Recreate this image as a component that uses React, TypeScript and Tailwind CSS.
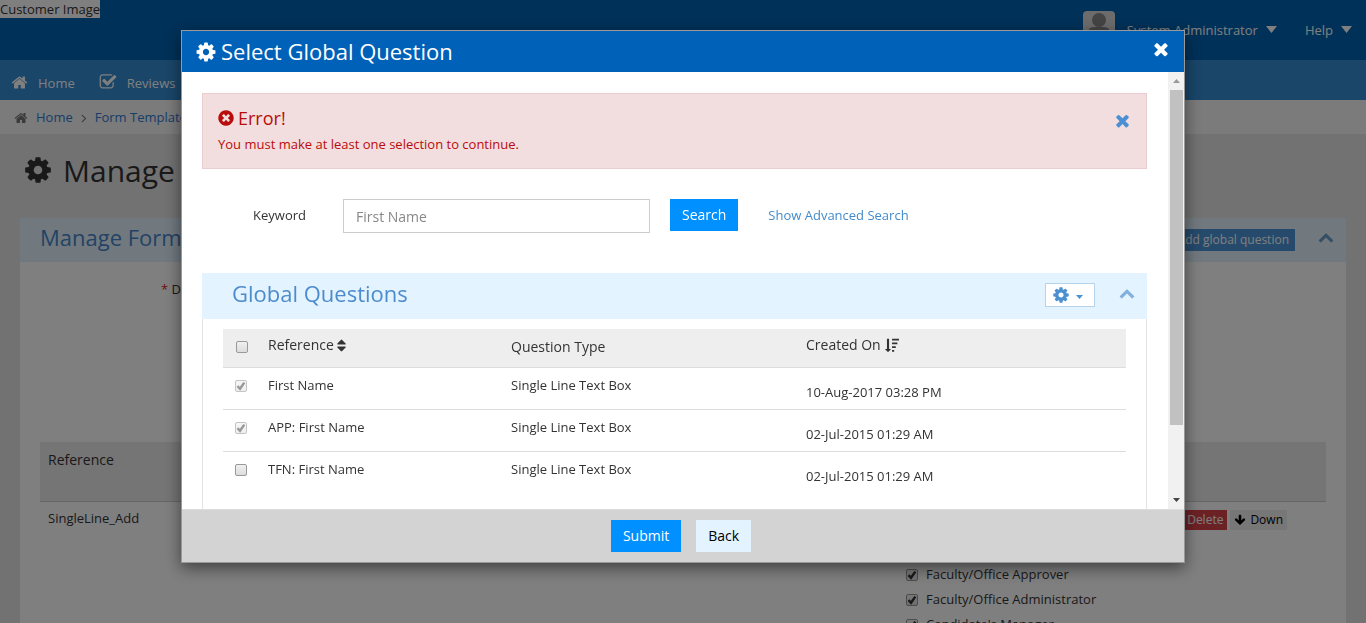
import React from 'react';

const ICONS = {
  cog: 'M1152 896q0-106-75-181t-181-75-181 75-75 181 75 181 181 75 181-75 75-181zm512-109v222q0 12-8 23t-20 13l-185 28q-19 54-39 91 35 50 107 138 10 12 10 25t-9 23q-27 37-99 108t-94 71q-12 0-26-9l-138-108q-44 23-91 38-16 136-29 186-7 28-36 28h-222q-14 0-24.5-8.5t-11.5-21.5l-28-184q-49-16-90-37l-141 107q-10 9-25 9-14 0-25-11-126-114-165-168-7-10-7-23 0-12 8-23 15-21 51-66.5t54-70.5q-27-50-41-99l-183-27q-13-2-21-12.5t-8-23.5v-222q0-12 8-23t19-13l186-28q14-46 39-92-40-57-107-138-10-12-10-24 0-10 9-23 26-36 98.5-107.5t94.5-71.5q13 0 26 10l138 107q44-23 91-38 16-136 29-186 7-28 36-28h222q14 0 24.5 8.5t11.5 21.5l28 184q49 16 90 37l142-107q9-9 24-9 13 0 25 10 129 119 165 170 7 8 7 22 0 12-8 23-15 21-51 66.5t-54 70.5q26 50 41 98l183 28q13 2 21 12.5t8 23.5z',
  times: 'M1490 1322q0 40-28 68l-136 136q-28 28-68 28t-68-28l-294-294-294 294q-28 28-68 28t-68-28l-136-136q-28-28-28-68t28-68l294-294-294-294q-28-28-28-68t28-68l136-136q28-28 68-28t68 28l294 294 294-294q28-28 68-28t68 28l136 136q28 28 28 68t-28 68l-294 294 294 294q28 28 28 68z',
  home: 'M1472 992v480q0 26-19 45t-45 19h-384v-384h-256v384h-384q-26 0-45-19t-19-45v-480q0-1 .5-3t.5-3l575-474 575 474q1 2 1 6zm223-69l-62 74q-8 9-21 11h-3q-13 0-21-7l-692-577-692 577q-12 8-24 7-13-2-21-11l-62-74q-8-10-7-23.5t11-21.5l719-599q32-26 76-26t76 26l244 204v-195q0-14 9-23t23-9h192q14 0 23 9t9 23v408l219 182q10 8 11 21.5t-7 23.5z',
  checkSquare: 'M1472 930v318q0 119-84.5 203.5t-203.5 84.5h-832q-119 0-203.5-84.5t-84.5-203.5v-832q0-119 84.5-203.5t203.5-84.5h832q63 0 117 25 15 7 18 23 3 17-9 29l-49 49q-10 10-23 10-3 0-9-2-23-6-45-6h-832q-66 0-113 47t-47 113v832q0 66 47 113t113 47h832q66 0 113-47t47-113v-254q0-13 9-22l64-64q10-10 23-10 6 0 12 3 20 8 20 29zm231-489l-814 814q-24 24-57 24t-57-24l-430-430q-24-24-24-57t24-57l110-110q24-24 57-24t57 24l263 263 647-647q24-24 57-24t57 24l110 110q24 24 24 57t-24 57z',
  timesCircle: 'M1277 1122q0-26-19-45l-181-181 181-181q19-19 19-45 0-27-19-46l-90-90q-19-19-46-19-26 0-45 19l-181 181-181-181q-19-19-45-19-27 0-46 19l-90 90q-19 19-19 46 0 26 19 45l181 181-181 181q-19 19-19 45 0 27 19 46l90 90q19 19 46 19 26 0 45-19l181-181 181 181q19 19 45 19 27 0 46-19l90-90q19-19 19-46zm387-226q0 209-103 385.5t-279.5 279.5-385.5 103-385.5-103-279.5-279.5-103-385.5 103-385.5 279.5-279.5 385.5-103 385.5 103 279.5 279.5 103 385.5z',
  chevronUp: 'M1683 1331l-166 165q-19 19-45 19t-45-19l-531-531-531 531q-19 19-45 19t-45-19l-166-165q-19-19-19-45.5t19-45.5l742-741q19-19 45-19t45 19l742 741q19 19 19 45.5t-19 45.5z',
  sort: 'M1408 1088q0 26-19 45l-448 448q-19 19-45 19t-45-19l-448-448q-19-19-19-45t19-45 45-19h896q26 0 45 19t19 45zm0-384q0 26-19 45t-45 19h-896q-26 0-45-19t-19-45 19-45l448-448q19-19 45-19t45 19l448 448q19 19 19 45z',
  sortDesc: 'M832 1344l-336 336q-16 16-32 0l-336-336q-20-24 8-40 4-2 12-2h204v-1174q0-32 32-32h192q32 0 32 32v1174h192q26 2 32 22 2 10 0 20zM960 96h832v208h-832zM960 544h640v208h-640zM960 992h448v208h-448zM960 1440h256v208h-256z',
  angleRight: 'M1171 960q0 13-10 23l-466 466q-10 10-23 10t-23-10l-50-50q-10-10-10-23t10-23l393-393-393-393q-10-10-10-23t10-23l50-50q10-10 23-10t23 10l466 466q10 10 10 23z',
  arrowDown: 'M1675 832q0 53-37 90l-651 652q-39 37-91 37-53 0-90-37l-651-652q-38-36-38-90 0-53 38-91l74-75q39-37 91-37 53 0 90 37l294 294v-704q0-52 38-90t90-38h128q52 0 90 38t38 90v704l294-294q37-37 90-37 52 0 91 37l75 75q37 39 37 91z',
};

function Icon({ name, className }: { name: keyof typeof ICONS; className: string }) {
  return (
    <svg viewBox="0 0 1792 1792" fill="currentColor" aria-hidden="true" className={`shrink-0 ${className}`}>
      <path d={ICONS[name]} />
    </svg>
  );
}

function Triangle({ className, up = false }: { className: string; up?: boolean }) {
  return (
    <svg viewBox="0 0 10 6" preserveAspectRatio="none" fill="currentColor" aria-hidden="true" className={`shrink-0 ${className}`}>
      <path d={up ? 'M0 6L5 0L10 6Z' : 'M0 0H10L5 6Z'} />
    </svg>
  );
}

function Checkbox({ id, label, checked = false, disabled = false }: { id: string; label?: string; checked?: boolean; disabled?: boolean }) {
  return (
    <span className="grid size-3 shrink-0">
      <input
        id={id}
        type="checkbox"
        aria-label={label}
        defaultChecked={checked}
        disabled={disabled}
        className="peer size-3 appearance-none rounded-xs border border-[#999] bg-linear-to-b from-[#f0f0f0] to-[#dcdcdc] [grid-area:1/1] disabled:border-[#c4c4c4] disabled:from-[#f6f6f6] disabled:to-[#efefef]"
      />
      <svg
        viewBox="0 0 12 12"
        fill="none"
        stroke="currentColor"
        strokeWidth="2.4"
        aria-hidden="true"
        className="pointer-events-none invisible size-3 text-[#333] [grid-area:1/1] peer-checked:visible peer-disabled:text-[#999]"
      >
        <path d="M2.5 6.2L5 8.8L9.3 2.6" />
      </svg>
    </span>
  );
}

const ROLES = ['Faculty/Office Approver', 'Faculty/Office Administrator', "Candidate's Manager"];

const QUESTIONS = [
  { ref: 'First Name', type: 'Single Line Text Box', created: '10-Aug-2017 03:28 PM', used: true },
  { ref: 'APP: First Name', type: 'Single Line Text Box', created: '02-Jul-2015 01:29 AM', used: true },
  { ref: 'TFN: First Name', type: 'Single Line Text Box', created: '02-Jul-2015 01:29 AM', used: false },
];

function Page() {
  return (
    <div className="flex min-h-full flex-col bg-[#e4e4e4]">
      <header className="flex h-[60px] items-start justify-between bg-[#0062b2] text-white">
        <span className="h-[18px] bg-white text-[13px] leading-[18px] text-[#333]">Customer Image</span>
        <div className="flex pt-[11px] pr-3.5">
          <span className="mr-3 flex size-8 items-end justify-center overflow-hidden rounded-sm bg-[#d8d8d8]">
            <svg viewBox="0 0 32 32" className="size-8 text-[#888]" fill="currentColor" aria-hidden="true">
              <circle cx="16" cy="9" r="7" />
              <path d="M5 32V22Q5 16 11 16H21Q27 16 27 22V32Z" />
            </svg>
          </span>
          <a href="#account" className="flex h-10 items-center gap-2 text-[13px]">
            System Administrator
            <Triangle className="mb-1 h-[7px] w-[11px]" />
          </a>
          <a href="#help" className="ml-7 flex h-10 items-center gap-2 text-[13px]">
            Help
            <Triangle className="mb-1 h-[7px] w-[11px]" />
          </a>
        </div>
      </header>
      <nav className="flex h-10 items-center bg-[#348cd2] pl-[11px] text-[13px] text-white">
        <a href="#home" className="flex items-center gap-2.5 pt-2">
          <Icon name="home" className="mb-1 size-[17px]" />
          Home
        </a>
        <a href="#reviews" className="ml-6 flex items-center gap-2.5 pt-2">
          <Icon name="checkSquare" className="mb-1 size-[18px]" />
          Reviews
        </a>
      </nav>
      <nav aria-label="Breadcrumb" className="flex h-[34px] items-center bg-[#f7f7f7] pt-0.5 pl-3.5 text-[13px] text-[#2f7bd0]">
        <Icon name="home" className="mr-2 size-3.5 text-[#777]" />
        <a href="#home">Home</a>
        <Icon name="angleRight" className="mx-1 size-3.5 text-[#777]" />
        <a href="#templates">Form Templates</a>
      </nav>
      <h1 className="flex h-[84px] items-center gap-2.5 pb-3 pl-[23px] text-[30px] text-[#333]">
        <Icon name="cog" className="size-[30px]" />
        Manage Form
      </h1>
      <section className="mx-5 flex-1 bg-white">
        <header className="flex h-11 items-center bg-[#e3f3ff] pr-3 pl-5 text-[#4686cb]">
          <h2 className="flex-1 pb-1.5 text-[22px]">Manage Form</h2>
          <button type="button" className="h-[22px] bg-[#4c94d8] px-1.5 text-xs text-white">
            Add global question
          </button>
          <button type="button" aria-label="Collapse form template" className="ml-[23px] pb-1.5">
            <Icon name="chevronUp" className="size-4 text-[#6f9fcb]" />
          </button>
        </header>
        <div className="px-5">
          <p className="h-[180px] pt-[18px] pl-[121px] text-[13px] text-[#333]">
            <span className="text-[#e02222]">*</span> Date
          </p>
          <table className="w-full table-fixed text-left text-[#333]">
            <colgroup>
              <col />
              <col className="w-[212px]" />
              <col className="w-[208px]" />
            </colgroup>
            <thead>
              <tr className="h-[59px] border-b border-[#ccc] bg-[#eaeaea] align-top text-sm">
                <th className="px-2 pt-2 font-normal">Reference</th>
                <th className="font-normal" />
                <th className="font-normal" />
              </tr>
            </thead>
            <tbody>
              <tr className="align-top text-[13px]">
                <td className="px-2 pt-[7px]">SingleLine_Add</td>
                <td className="pt-[61px]">
                  <ul>
                    {ROLES.map((role, i) => (
                      <li key={role} className="flex h-[25px] items-center gap-2">
                        <Checkbox id={`role-${i}`} checked />
                        <label htmlFor={`role-${i}`}>{role}</label>
                      </li>
                    ))}
                  </ul>
                </td>
                <td className="pt-2">
                  <div className="flex justify-end gap-[3px] pr-[39px]">
                    <button type="button" className="h-5 bg-[#d9434a] px-1 text-xs text-white">Delete</button>
                    <button type="button" className="flex h-5 items-center gap-1 bg-[#eee] px-1 text-xs text-black">
                      <Icon name="arrowDown" className="size-3" />
                      Down
                    </button>
                  </div>
                </td>
              </tr>
            </tbody>
          </table>
        </div>
      </section>
    </div>
  );
}

function Scrollbar() {
  return (
    <div aria-hidden="true" className="flex w-4 shrink-0 flex-col items-center bg-[#f1f1f1]">
      <div className="flex h-[18px] items-center"><Triangle up className="h-1 w-[7px] text-[#999]" /></div>
      <div className="w-[13px] grow-335 basis-0 bg-[#c1c1c1]" />
      <div className="grow-66 basis-0" />
      <div className="flex h-[18px] items-center"><Triangle className="h-1 w-[7px] text-[#444]" /></div>
    </div>
  );
}

function Dialog() {
  return (
    <div
      role="dialog"
      aria-modal="true"
      aria-labelledby="dialog-title"
      className="flex w-full max-w-[1004px] flex-col border border-[#999] bg-white text-[#333] shadow-[0_5px_15px_rgba(0,0,0,0.5)]"
    >
      <header className="flex h-[41px] items-center justify-between bg-[#0061b8] px-[13px] text-white">
        <h2 id="dialog-title" className="flex items-center gap-1 text-[22px]">
          <Icon name="cog" className="size-[22px]" />
          Select Global Question
        </h2>
        <button type="button" aria-label="Close" className="pb-1.5">
          <Icon name="times" className="size-5" />
        </button>
      </header>

      <div className="flex h-[calc(100vh-186px)]">
        <div className="min-w-0 flex-1 overflow-y-auto pt-[21px] pr-[21px] pl-5 [scrollbar-width:none]">
          <div role="alert" className="flex h-[76px] justify-between border border-[#ebccd1] bg-[#f2dede] px-3.5 pt-[11px] text-[#b90c0c]">
            <div>
              <h3 className="flex h-[26px] items-center gap-[3px] text-lg">
                <Icon name="timesCircle" className="size-[18px]" />
                Error!
              </h3>
              <p className="pl-px text-[13px] leading-[26px]">You must make at least one selection to continue.</p>
            </div>
            <button type="button" aria-label="Dismiss" className="h-[30px] text-[#4b90d4]">
              <Icon name="times" className="size-[19px]" />
            </button>
          </div>

          <form className="mt-[30px] flex h-[34px] items-start text-[13px]">
            <label htmlFor="keyword" className="w-[104px] text-right leading-8">Keyword</label>
            <input id="keyword" type="text" defaultValue="First Name" className="ml-[37px] h-[34px] w-[307px] border border-[#ccc] px-3 text-sm text-[#888]" />
            <button type="button" className="ml-5 h-8 bg-[#0090ff] px-3 text-sm text-white">Search</button>
            <a href="#advanced" className="ml-[30px] leading-8 text-[#428bca]">Show Advanced Search</a>
          </form>

          <section className="mt-10">
            <header className="flex h-[46px] items-center bg-[#e3f3ff] pr-3 pl-[30px] text-[#4d8ccc]">
              <h3 className="flex-1 pb-1.5 text-[22px]">Global Questions</h3>
              <button type="button" aria-label="Table settings" className="mb-0.5 flex h-6 w-[50px] items-center gap-1.5 border border-[#b5d3ea] bg-white px-1.5 text-[#4b90d0]">
                <Icon name="cog" className="size-[18px]" />
                <Triangle className="mt-1 h-1 w-[7px]" />
              </button>
              <button type="button" aria-label="Collapse global questions" className="ml-6 pb-1.5">
                <Icon name="chevronUp" className="size-4 text-[#82b1de]" />
              </button>
            </header>
            <div className="border-x border-b border-[#e3e3e3] px-5 pt-2.5 pb-24">
              <table className="w-full table-fixed text-left">
                <colgroup>
                  <col className="w-[45px]" />
                  <col className="w-[243px]" />
                  <col className="w-[295px]" />
                  <col />
                </colgroup>
                <thead>
                  <tr className="h-[38px] border-b border-[#ddd] bg-[#eee] align-top text-sm">
                    <th className="pt-3 pl-[13px] font-normal"><Checkbox id="all" label="Select all questions" /></th>
                    <th aria-sort="none" className="pt-1.5 font-normal">
                      <button type="button" className="flex items-center">
                        Reference
                        <Icon name="sort" className="size-[15px]" />
                      </button>
                    </th>
                    <th className="pt-2 font-normal">Question Type</th>
                    <th aria-sort="descending" className="pt-1.5 font-normal">
                      <button type="button" className="flex items-center gap-[3px]">
                        Created On
                        <Icon name="sortDesc" className="size-[15px]" />
                      </button>
                    </th>
                  </tr>
                </thead>
                <tbody>
                  {QUESTIONS.map((q, i) => (
                    <tr key={q.ref} className="h-[42px] border-b border-[#ddd] align-top text-[13px] last:border-b-0">
                      <td className="pt-3 pl-3"><Checkbox id={`question-${i}`} label={q.ref} checked={q.used} disabled={q.used} /></td>
                      <td className="pt-2">{q.ref}</td>
                      <td className="pt-2">{q.type}</td>
                      <td className="pt-[15px]">{q.created}</td>
                    </tr>
                  ))}
                </tbody>
              </table>
            </div>
          </section>
        </div>
        <Scrollbar />
      </div>

      <footer className="flex h-[53px] items-center justify-center gap-[15px] border-t border-[#ddd] bg-[#d3d3d3] pr-1 text-sm">
        <button type="button" className="h-8 bg-[#0090ff] px-3 text-white">Submit</button>
        <button type="button" className="h-8 bg-[#e3f3ff] px-3 text-black">Back</button>
      </footer>
    </div>
  );
}

export default function App() {
  return (
    <div className="h-screen overflow-hidden font-['Open_Sans',sans-serif]">
      <Page />
      <div className="fixed inset-0 flex items-start justify-center bg-black/50 pt-[30px]">
        <Dialog />
      </div>
    </div>
  );
}
